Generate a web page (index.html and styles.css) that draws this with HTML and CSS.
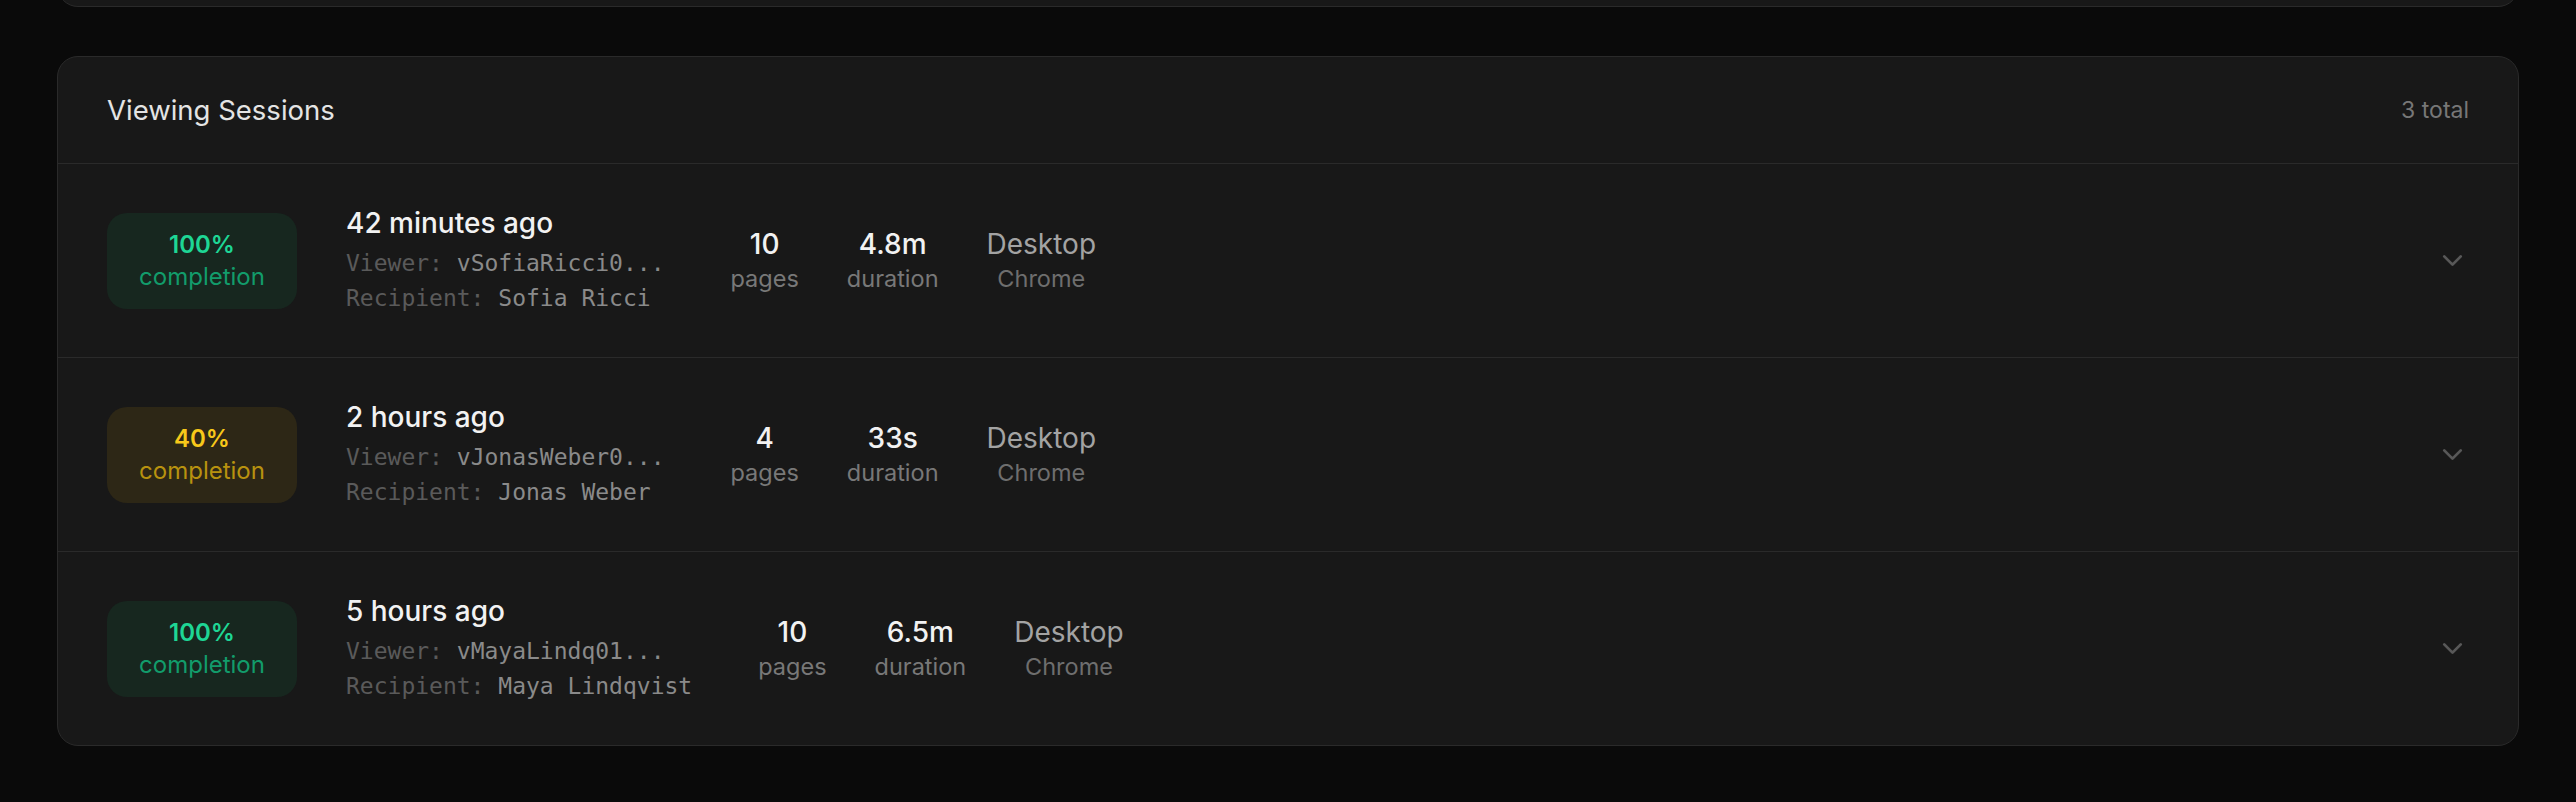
FILE: index.html
```html
<!DOCTYPE html>
<html lang="en">
<head>
    <meta charset="UTF-8">
    <meta name="viewport" content="width=device-width, initial-scale=1.0">
    <title>Viewing Sessions</title>
    <link rel="stylesheet" href="styles.css">
</head>
<body>
    <div class="page">
        <div class="card card-prev"></div>

        <section class="card sessions">
            <header class="sessions-head">
                <h2>Viewing Sessions</h2>
                <span class="count">3 total</span>
            </header>

            <div class="session">
                <div class="badge badge-done">
                    <strong>100%</strong>
                    <span>completion</span>
                </div>
                <div class="info">
                    <div class="when">42 minutes ago</div>
                    <div class="meta"><span class="key">Viewer:</span> vSofiaRicci0...</div>
                    <div class="meta"><span class="key">Recipient:</span> Sofia Ricci</div>
                </div>
                <div class="stats">
                    <div class="stat"><b>10</b><span>pages</span></div>
                    <div class="stat"><b>4.8m</b><span>duration</span></div>
                    <div class="stat device"><b>Desktop</b><span>Chrome</span></div>
                </div>
                <svg class="chev" viewBox="0 0 24 24"><path d="m6 9 6 6 6-6"/></svg>
            </div>

            <div class="session">
                <div class="badge badge-part">
                    <strong>40%</strong>
                    <span>completion</span>
                </div>
                <div class="info">
                    <div class="when">2 hours ago</div>
                    <div class="meta"><span class="key">Viewer:</span> vJonasWeber0...</div>
                    <div class="meta"><span class="key">Recipient:</span> Jonas Weber</div>
                </div>
                <div class="stats">
                    <div class="stat"><b>4</b><span>pages</span></div>
                    <div class="stat"><b>33s</b><span>duration</span></div>
                    <div class="stat device"><b>Desktop</b><span>Chrome</span></div>
                </div>
                <svg class="chev" viewBox="0 0 24 24"><path d="m6 9 6 6 6-6"/></svg>
            </div>

            <div class="session">
                <div class="badge badge-done">
                    <strong>100%</strong>
                    <span>completion</span>
                </div>
                <div class="info">
                    <div class="when">5 hours ago</div>
                    <div class="meta"><span class="key">Viewer:</span> vMayaLindq01...</div>
                    <div class="meta"><span class="key">Recipient:</span> Maya Lindqvist</div>
                </div>
                <div class="stats">
                    <div class="stat"><b>10</b><span>pages</span></div>
                    <div class="stat"><b>6.5m</b><span>duration</span></div>
                    <div class="stat device"><b>Desktop</b><span>Chrome</span></div>
                </div>
                <svg class="chev" viewBox="0 0 24 24"><path d="m6 9 6 6 6-6"/></svg>
            </div>
        </section>
    </div>
</body>
</html>
```

FILE: styles.css
```css
* {
    margin: 0;
    padding: 0;
    box-sizing: border-box;
}

body {
    background: #0a0a0a;
    font-family: Inter, 'Noto Sans', sans-serif;
    color: #f0f0f0;
    overflow: hidden;
}

.page {
    padding: 0 57px;
}

.card {
    background: #181818;
    border: 1px solid #2a2a2a;
    border-radius: 21px;
}

/* bottom of the card above, scrolled mostly out of view */
.card-prev {
    height: 120px;
    margin-top: -113px;
}

.sessions {
    margin-top: 49px;
    overflow: hidden;
}

.sessions-head {
    height: 107px;
    padding: 0 49px;
    display: flex;
    align-items: center;
    justify-content: space-between;
    border-bottom: 1px solid #2a2a2a;
}

.sessions-head h2 {
    font-size: 27.5px;
    font-weight: 400;
    color: #e4e4e4;
}

.count {
    font-size: 23px;
    color: #777;
}

.session {
    height: 194px;
    padding: 0 49px;
    display: flex;
    align-items: center;
    border-bottom: 1px solid #2a2a2a;
}

.session:last-child {
    height: 193px;
    border-bottom: none;
}

.badge {
    width: 190px;
    height: 96px;
    border-radius: 20px;
    display: flex;
    flex-direction: column;
    align-items: center;
    justify-content: center;
    line-height: 32px;
    margin-right: 49px;
}

.badge strong {
    font-size: 24px;
    font-weight: 600;
}

.badge span {
    font-size: 24px;
}

.badge-done {
    background: #17271f;
}

.badge-done strong {
    color: #1ed695;
}

.badge-done span {
    color: #129c6b;
}

.badge-part {
    background: #2d2716;
}

.badge-part strong {
    color: #f7c81a;
}

.badge-part span {
    color: #b8920f;
}

.info {
    margin-right: 66px;
}

.when {
    font-size: 28px;
    font-weight: 500;
    line-height: 36px;
    margin-bottom: 5px;
    color: #f2f2f2;
}

.meta {
    font-family: 'DejaVu Sans Mono', 'Liberation Mono', monospace;
    font-size: 23px;
    line-height: 35px;
    color: #8a8a8a;
    white-space: nowrap;
}

.meta .key {
    color: #5a5a5a;
}

.stats {
    display: flex;
    gap: 48px;
}

.stat {
    display: flex;
    flex-direction: column;
    align-items: center;
}

.stat b {
    font-size: 28px;
    font-weight: 500;
    line-height: 36px;
    color: #f2f2f2;
}

.stat span {
    font-size: 23.5px;
    line-height: 34px;
    color: #787878;
}

.stat.device b {
    font-weight: 400;
    color: #a3a3a3;
}

.stat.device span {
    color: #6e6e6e;
}

.chev {
    width: 33px;
    height: 33px;
    margin-left: auto;
    fill: none;
    stroke: #585858;
    stroke-width: 2;
    stroke-linecap: round;
    stroke-linejoin: round;
}
```
